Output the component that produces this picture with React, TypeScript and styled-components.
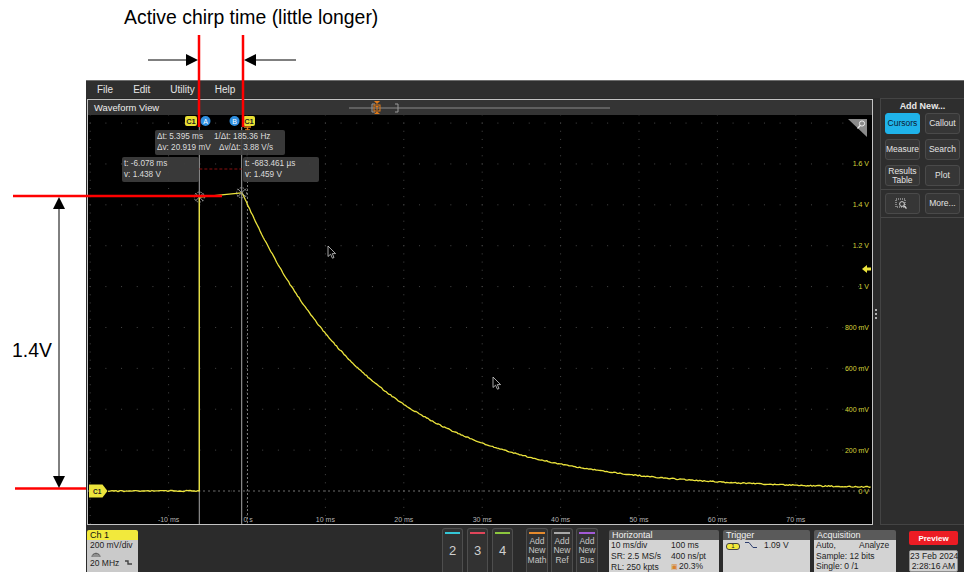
import React from "react";
import styled, { createGlobalStyle } from "styled-components";

const GlobalStyle = createGlobalStyle`
  html, body {
    margin: 0;
    padding: 0;
    background: #ffffff;
  }
  body {
    font-family: "Liberation Sans", Arial, sans-serif;
  }
`;

// plot geometry (local to the black plot area)
const PLOT_W = 784;
const PLOT_H = 409;
const ZERO_X = 159;
const PX_PER_MS = 7.84;
const ZERO_Y = 376;
const PX_PER_V = 204.4;
const DIV_X = 78.4;
const DIV_Y = 40.88;

const tx = (ms: number) => ZERO_X + ms * PX_PER_MS;
const vy = (v: number) => ZERO_Y - v * PX_PER_V;

const CURSOR_A = tx(-6.078);
const CURSOR_B = tx(-0.683);

const noise = (i: number) => {
  const s = Math.sin(i * 12.9898) * 43758.5453;
  return s - Math.floor(s) - 0.5;
};

function buildTrace() {
  const pts: string[] = [];
  for (let x = 20; x < CURSOR_A; x += 2) {
    pts.push(`${x.toFixed(1)},${(ZERO_Y + noise(x) * 1.2).toFixed(1)}`);
  }
  pts.push(`${CURSOR_A.toFixed(1)},${ZERO_Y}`);
  pts.push(`${CURSOR_A.toFixed(1)},${vy(1.438).toFixed(1)}`);
  pts.push(`${CURSOR_B.toFixed(1)},${vy(1.459).toFixed(1)}`);
  for (let x = CURSOR_B + 0.5; x <= PLOT_W; x += 1.5) {
    const t = (x - CURSOR_B) / PX_PER_MS;
    const v = 1.459 * Math.exp(-t / 16.5) + 0.008;
    pts.push(`${x.toFixed(1)},${(vy(v) + noise(x) * 1.1).toFixed(1)}`);
  }
  return pts.join(" ");
}

const TRACE = buildTrace();

const timeLabels = [-10, 0, 10, 20, 30, 40, 50, 60, 70];
const voltLabels = [
  { v: 1.6, t: "1.6 V" },
  { v: 1.4, t: "1.4 V" },
  { v: 1.2, t: "1.2 V" },
  { v: 1.0, t: "1 V" },
  { v: 0.8, t: "800 mV" },
  { v: 0.6, t: "600 mV" },
  { v: 0.4, t: "400 mV" },
  { v: 0.2, t: "200 mV" },
  { v: 0, t: "0 V" },
];

const menuItems = ["File", "Edit", "Utility", "Help"];

const sideButtons = [
  { label: "Cursors", active: true },
  { label: "Callout" },
  { label: "Measure" },
  { label: "Search" },
  { label: "Results Table" },
  { label: "Plot" },
];

function Pointer({ x, y }: { x: number; y: number }) {
  return (
    <path
      transform={`translate(${x} ${y})`}
      d="M0 0 L0 10.5 L2.6 8.2 L4.4 12.2 L6 11.5 L4.3 7.6 L7.6 7.6 Z"
      fill="#000"
      stroke="#cfcfcf"
      strokeWidth="0.8"
    />
  );
}

function PlotDrawing() {
  const vLines: number[] = [];
  for (let k = -2; k <= 8; k++) vLines.push(ZERO_X + k * DIV_X);
  const hLines: number[] = [];
  for (let k = 0; k <= 9; k++) hLines.push(ZERO_Y - k * DIV_Y);

  return (
    <svg width={PLOT_W} height={PLOT_H} viewBox={`0 0 ${PLOT_W} ${PLOT_H}`}>
      {/* graticule */}
      {hLines.map((y) => (
        <line
          key={`h${y}`}
          x1={vLines[0] - 0.5}
          x2={PLOT_W}
          y1={y}
          y2={y}
          stroke="#474747"
          strokeWidth="1"
          strokeDasharray={`1 ${DIV_X / 5 - 1}`}
        />
      ))}
      {vLines.map((x) => (
        <line
          key={`v${x}`}
          x1={x}
          x2={x}
          y1={ZERO_Y + (DIV_Y / 5) * 4 + 0.5}
          y2={0}
          stroke="#474747"
          strokeWidth="1"
          strokeDasharray={`1 ${DIV_Y / 5 - 1}`}
        />
      ))}

      {/* ground reference + trigger position */}
      <line x1={0} x2={PLOT_W} y1={ZERO_Y} y2={ZERO_Y} stroke="#6c6c6c" strokeDasharray="2 3" />
      <line x1={ZERO_X + 0.5} x2={ZERO_X + 0.5} y1={14} y2={PLOT_H} stroke="#777" strokeDasharray="2 2" />

      {/* cursors */}
      <line x1={CURSOR_A} x2={CURSOR_A} y1={12} y2={PLOT_H} stroke="#8c8c8c" strokeWidth="1.2" />
      <line x1={CURSOR_B} x2={CURSOR_B} y1={12} y2={PLOT_H} stroke="#8c8c8c" strokeWidth="1.2" />
      <line
        x1={CURSOR_A}
        x2={CURSOR_B}
        y1={54}
        y2={54}
        stroke="#8a1010"
        strokeWidth="1"
        strokeDasharray="3 2"
      />

      {/* trace */}
      <polyline points={TRACE} fill="none" stroke="#ece43c" strokeWidth="1.3" strokeLinejoin="round" />

      {/* cursor crosshairs */}
      {[
        [CURSOR_A, vy(1.438)],
        [CURSOR_B, vy(1.459)],
      ].map(([cx, cy]) => (
        <g key={cx} stroke="#9a9a9a" strokeWidth="1" fill="none">
          <line x1={cx - 4} y1={cy - 4} x2={cx + 4} y2={cy + 4} />
          <line x1={cx - 4} y1={cy + 4} x2={cx + 4} y2={cy - 4} />
          <circle cx={cx} cy={cy} r="5" strokeDasharray="1.5 1.5" />
        </g>
      ))}

      {/* cursor badges */}
      <rect x={97} y={1} width={12} height={10} rx={2} fill="#e8df33" />
      <text x={103} y={9} fontSize="7.5" fontWeight="bold" textAnchor="middle" fill="#222">
        C1
      </text>
      <circle cx={117.5} cy={6} r={5} fill="#2f8fe0" />
      <text x={117.5} y={8.6} fontSize="7" textAnchor="middle" fill="#fff">
        A
      </text>
      <circle cx={146.5} cy={6} r={5} fill="#2f8fe0" />
      <text x={146.5} y={8.6} fontSize="7" textAnchor="middle" fill="#fff">
        B
      </text>
      <rect x={155} y={1} width={12} height={10} rx={2} fill="#e8df33" />
      <text x={161} y={9} fontSize="7.5" fontWeight="bold" textAnchor="middle" fill="#222">
        C1
      </text>
      <path d="M156 12 L163 12 M159.5 12 L159.5 15 M157 15 L162 15" stroke="#e07b1a" strokeWidth="1.4" fill="none" />

      {/* voltage axis */}
      {voltLabels.map((l) => (
        <text
          key={l.t}
          x={781}
          y={vy(l.v) + 2.5}
          fontSize="7"
          textAnchor="end"
          fill="#d6d33a"
        >
          {l.t}
        </text>
      ))}

      {/* time axis */}
      {timeLabels.map((ms) => (
        <text
          key={ms}
          x={ms === 0 ? ZERO_X - 3.5 : tx(ms)}
          y={406.5}
          fontSize="7"
          textAnchor={ms === 0 ? "start" : "middle"}
          fill="#b4b4b4"
        >
          {ms === 0 ? "0 s" : `${ms} ms`}
        </text>
      ))}

      {/* channel ground marker */}
      <path d="M1 369.5 L14.5 369.5 L19.5 376 L14.5 382.5 L1 382.5 Z" fill="#ece43c" />
      <text x={5} y={378.5} fontSize="6.5" fontWeight="bold" fill="#222">
        C1
      </text>

      {/* trigger level */}
      <path d="M774 154 L779 150 L779 152.5 L783 152.5 L783 155.5 L779 155.5 L779 158 Z" fill="#ece43c" />

      {/* zoom corner */}
      <path d="M760 4 L779 4 L779 22 Z" fill="#8a8a8a" />
      <circle cx={774} cy={8.5} r={2.6} stroke="#eee" strokeWidth="1" fill="none" />
      <line x1={772.2} y1={10.5} x2={769.5} y2={13.5} stroke="#eee" strokeWidth="1.2" />

      <Pointer x={240} y={131} />
      <Pointer x={405} y={262} />
    </svg>
  );
}

function HeaderSlider() {
  return (
    <svg width="262" height="15" viewBox="0 0 262 15">
      <line x1="0" x2="261" y1="8" y2="8" stroke="#8a8a8a" strokeWidth="1" />
      <path d="M26 4 L23 4 L23 12 L26 12" stroke="#9a9a9a" fill="none" />
      <path d="M46 4 L49 4 L49 12 L46 12" stroke="#9a9a9a" fill="none" />
      <path d="M25 1 L31 1 L28 4 Z" fill="#e07b1a" />
      <rect x="25" y="5" width="6" height="6" stroke="#e07b1a" fill="none" />
      <path d="M26.5 6.5 L29.5 6.5 M28 6.5 L28 10" stroke="#e07b1a" />
      <path d="M25 14 L31 14 L28 11.5 Z" fill="#e07b1a" />
    </svg>
  );
}

function AnnotationLayer() {
  return (
    <Overlay width="964" height="572" viewBox="0 0 964 572">
      <line x1="199" y1="35" x2="199" y2="127" stroke="#ff0000" strokeWidth="2.5" />
      <line x1="243" y1="35" x2="243" y2="127" stroke="#ff0000" strokeWidth="2.5" />
      <line x1="13" y1="196" x2="222" y2="196" stroke="#ff0000" strokeWidth="2.5" />
      <line x1="15" y1="488.5" x2="86" y2="488.5" stroke="#ff0000" strokeWidth="2.5" />

      <line x1="148" y1="60" x2="188" y2="60" stroke="#000" strokeWidth="1" />
      <path d="M186 54 L198 60 L186 66 Z" fill="#000" />
      <line x1="296" y1="60" x2="254" y2="60" stroke="#000" strokeWidth="1" />
      <path d="M256 54 L244 60 L256 66 Z" fill="#000" />

      <line x1="59" y1="206" x2="59" y2="478" stroke="#000" strokeWidth="1" />
      <path d="M53 209 L59 197 L65 209 Z" fill="#000" />
      <path d="M53 476 L59 488 L65 476 Z" fill="#000" />
    </Overlay>
  );
}

export default function App() {
  return (
    <>
      <GlobalStyle />
      <Page>
        <TitleRow>
          <Title>Active chirp time (little longer)</Title>
        </TitleRow>

        <BodyRow>
          <Gutter>
            <LevelLabel>1.4V</LevelLabel>
          </Gutter>

          <Scope>
            <MenuBar>
              {menuItems.map((m) => (
                <MenuItem key={m}>{m}</MenuItem>
              ))}
            </MenuBar>

            <MainRow>
              <WaveformView>
                <ViewHeader>
                  <ViewTitle>Waveform View</ViewTitle>
                  <SliderSlot>
                    <HeaderSlider />
                  </SliderSlot>
                </ViewHeader>
                <PlotArea>
                  <PlotDrawing />
                  <Readout $left={67} $top={15} $width={130}>
                    <ReadoutRow>
                      <ReadoutCell $width={57}>Δt: 5.395 ms</ReadoutCell>
                      <ReadoutCell>1/Δt: 185.36 Hz</ReadoutCell>
                    </ReadoutRow>
                    <ReadoutRow>
                      <ReadoutCell $width={62}>Δv: 20.919 mV</ReadoutCell>
                      <ReadoutCell>Δv/Δt: 3.88 V/s</ReadoutCell>
                    </ReadoutRow>
                  </Readout>
                  <Readout $left={34} $top={42} $width={77}>
                    <ReadoutRow>
                      <ReadoutCell>t: -6.078 ms</ReadoutCell>
                    </ReadoutRow>
                    <ReadoutRow>
                      <ReadoutCell>v: 1.438 V</ReadoutCell>
                    </ReadoutRow>
                  </Readout>
                  <Readout $left={155} $top={42} $width={76}>
                    <ReadoutRow>
                      <ReadoutCell>t: -683.461 µs</ReadoutCell>
                    </ReadoutRow>
                    <ReadoutRow>
                      <ReadoutCell>v: 1.459 V</ReadoutCell>
                    </ReadoutRow>
                  </Readout>
                </PlotArea>
              </WaveformView>

              <Handle>
                <HandleDot />
                <HandleDot />
                <HandleDot />
              </Handle>

              <SidePanel>
                <SideTitle>Add New...</SideTitle>
                <SideGrid>
                  {sideButtons.map((b) => (
                    <SideButton key={b.label} $active={b.active}>
                      {b.label === "Results Table" ? (
                        <>
                          Results
                          <br />
                          Table
                        </>
                      ) : (
                        b.label
                      )}
                    </SideButton>
                  ))}
                </SideGrid>
                <SideDivider />
                <SideGrid>
                  <SideButton>
                    <svg width="14" height="12" viewBox="0 0 14 12">
                      <rect x="1" y="1" width="9" height="8" stroke="#cfcfcf" strokeDasharray="1 1" fill="none" />
                      <circle cx="7" cy="6" r="2.4" stroke="#cfcfcf" fill="none" />
                      <line x1="8.8" y1="7.8" x2="11.5" y2="10.5" stroke="#cfcfcf" strokeWidth="1.3" />
                    </svg>
                  </SideButton>
                  <SideButton>More...</SideButton>
                </SideGrid>
                <SideDivider />
              </SidePanel>
            </MainRow>

            <BottomBar>
              <ChannelBadge>
                <BadgeHead>Ch 1</BadgeHead>
                <BadgeBody>
                  <div>200 mV/div</div>
                  <svg width="10" height="8" viewBox="0 0 10 8">
                    <path d="M1 7 C1 2 9 2 9 7" stroke="#555" fill="none" />
                    <path d="M3 7 L3 4 M5 7 L5 3.5 M7 7 L7 4" stroke="#555" />
                  </svg>
                  <BadgeLine>
                    <span>20 MHz</span>
                    <svg width="7" height="6" viewBox="0 0 7 6">
                      <path d="M0 1 L3 1 L3 4 L7 4" stroke="#444" strokeWidth="1.4" fill="none" />
                    </svg>
                  </BadgeLine>
                </BadgeBody>
              </ChannelBadge>

              <ButtonGroup $offset={304} $gap={4}>
                <TileButton $stripe="#34c6d6" $width={21}>
                  <TileNumber>2</TileNumber>
                </TileButton>
                <TileButton $stripe="#e0455a" $width={21}>
                  <TileNumber>3</TileNumber>
                </TileButton>
                <TileButton $stripe="#8cc63e" $width={21}>
                  <TileNumber>4</TileNumber>
                </TileButton>
              </ButtonGroup>

              <ButtonGroup $offset={13} $gap={3}>
                <TileButton $stripe="#e58a2d" $width={22}>
                  <TileText>Add New Math</TileText>
                </TileButton>
                <TileButton $stripe="#a9a9a9" $width={22}>
                  <TileText>Add New Ref</TileText>
                </TileButton>
                <TileButton $stripe="#a15ad6" $width={22}>
                  <TileText>Add New Bus</TileText>
                </TileButton>
              </ButtonGroup>

              <ButtonGroup $offset={11} $gap={4}>
                <InfoBox $width={110}>
                  <InfoHead>Horizontal</InfoHead>
                  <InfoBody>
                    <InfoLine>
                      <InfoCell $width={60}>10 ms/div</InfoCell>
                      <InfoCell>100 ms</InfoCell>
                    </InfoLine>
                    <InfoLine>
                      <InfoCell $width={60}>SR: 2.5 MS/s</InfoCell>
                      <InfoCell>400 ns/pt</InfoCell>
                    </InfoLine>
                    <InfoLine>
                      <InfoCell $width={60}>RL: 250 kpts</InfoCell>
                      <InfoCell>
                        <WarnMark>▣</WarnMark>20.3%
                      </InfoCell>
                    </InfoLine>
                  </InfoBody>
                </InfoBox>

                <InfoBox $width={87}>
                  <InfoHead>Trigger</InfoHead>
                  <InfoBody>
                    <InfoLine>
                      <TriggerPill>1</TriggerPill>
                      <svg width="14" height="8" viewBox="0 0 14 8">
                        <path d="M1 1.5 L5 1.5 L9 6.5 L13 6.5" stroke="#2d3e6e" fill="none" />
                      </svg>
                      <InfoCell $pad={6}>1.09 V</InfoCell>
                    </InfoLine>
                  </InfoBody>
                </InfoBox>

                <InfoBox $width={82}>
                  <InfoHead>Acquisition</InfoHead>
                  <InfoBody>
                    <InfoLine>
                      <InfoCell $width={43}>Auto,</InfoCell>
                      <InfoCell>Analyze</InfoCell>
                    </InfoLine>
                    <InfoLine>
                      <InfoCell>Sample: 12 bits</InfoCell>
                    </InfoLine>
                    <InfoLine>
                      <InfoCell>Single: 0 /1</InfoCell>
                    </InfoLine>
                  </InfoBody>
                </InfoBox>
              </ButtonGroup>

              <PreviewColumn>
                <PreviewButton>Preview</PreviewButton>
                <DateBox>
                  <div>23 Feb 2024</div>
                  <div>2:28:16 AM</div>
                </DateBox>
              </PreviewColumn>
            </BottomBar>
          </Scope>
        </BodyRow>

        <AnnotationLayer />
      </Page>
    </>
  );
}

const Page = styled.div`
  position: relative;
  width: 964px;
  height: 572px;
  overflow: hidden;
  background: #ffffff;
`;

const Overlay = styled.svg`
  position: absolute;
  left: 0;
  top: 0;
  pointer-events: none;
`;

const TitleRow = styled.div`
  height: 80px;
  box-sizing: border-box;
  padding: 6px 0 0 124px;
`;

const Title = styled.div`
  font-family: "Liberation Sans", Arial, sans-serif;
  font-size: 19.4px;
  line-height: 22px;
  color: #000;
`;

const BodyRow = styled.div`
  display: flex;
  height: 492px;
`;

const Gutter = styled.div`
  width: 86px;
  flex-shrink: 0;
  box-sizing: border-box;
  padding: 259px 0 0 12px;
`;

const LevelLabel = styled.div`
  font-size: 19.4px;
  line-height: 22px;
  color: #000;
`;

const Scope = styled.div`
  width: 878px;
  display: flex;
  flex-direction: column;
  background: #2a2a2a;
  font-family: "Liberation Sans", Arial, sans-serif;
`;

const MenuBar = styled.div`
  height: 18px;
  box-sizing: border-box;
  border-top: 1px solid #6e6e6e;
  background: #2f2f2f;
  display: flex;
  align-items: center;
  gap: 20px;
  padding-left: 11px;
`;

const MenuItem = styled.span`
  font-size: 10px;
  color: #e6e6e6;
`;

const MainRow = styled.div`
  height: 428px;
  display: flex;
  box-sizing: border-box;
  padding-top: 1px;
`;

const WaveformView = styled.div`
  width: 786px;
  height: 426px;
  margin-left: 1px;
  box-sizing: border-box;
  border: 1px solid #c4c4c4;
  display: flex;
  flex-direction: column;
  background: #000;
`;

const ViewHeader = styled.div`
  height: 15px;
  background: #343434;
  display: flex;
  align-items: center;
  padding-left: 6px;
`;

const ViewTitle = styled.span`
  width: 66px;
  font-size: 9.4px;
  color: #eeeeee;
  white-space: nowrap;
`;

const SliderSlot = styled.div`
  margin-left: 189px;
  height: 15px;
  display: flex;
  align-items: center;
`;

const PlotArea = styled.div`
  position: relative;
  width: 784px;
  height: 409px;
  background: #000;

  > svg {
    display: block;
  }
`;

const Readout = styled.div<{ $left: number; $top: number; $width: number }>`
  position: absolute;
  left: ${({ $left }) => $left}px;
  top: ${({ $top }) => $top}px;
  width: ${({ $width }) => $width}px;
  box-sizing: border-box;
  padding: 2px 2px;
  background: rgba(62, 62, 62, 0.92);
  border-radius: 2px;
  color: #dcdcdc;
  font-size: 8.2px;
  line-height: 10.5px;
`;

const ReadoutRow = styled.div`
  display: flex;
  white-space: nowrap;
`;

const ReadoutCell = styled.span<{ $width?: number }>`
  ${({ $width }) => ($width ? `width: ${$width}px;` : "")}
  flex-shrink: 0;
`;

const Handle = styled.div`
  width: 7px;
  display: flex;
  flex-direction: column;
  align-items: center;
  justify-content: center;
  gap: 2px;
  padding-top: 2px;
`;

const HandleDot = styled.span`
  width: 2px;
  height: 2px;
  background: #b0b0b0;
`;

const SidePanel = styled.div`
  width: 85px;
  height: 427px;
  margin-top: -1px;
  box-sizing: border-box;
  border: 1px solid #444;
  border-right: none;
  background: #2e2e2e;
  display: flex;
  flex-direction: column;
`;

const SideTitle = styled.div`
  height: 14px;
  line-height: 14px;
  text-align: center;
  font-size: 9px;
  font-weight: bold;
  color: #e8e8e8;
`;

const SideGrid = styled.div`
  display: grid;
  grid-template-columns: 35px 35px;
  grid-auto-rows: 21px;
  gap: 5px;
  padding: 0 4px;
`;

const SideButton = styled.div<{ $active?: boolean }>`
  box-sizing: border-box;
  border-radius: 3px;
  border: 1px solid ${({ $active }) => ($active ? "#1fb3ea" : "#4a4a4a")};
  background: ${({ $active }) => ($active ? "#1fb3ea" : "#363636")};
  color: ${({ $active }) => ($active ? "#0c2030" : "#e4e4e4")};
  font-size: 8.5px;
  line-height: 9px;
  display: flex;
  align-items: center;
  justify-content: center;
  text-align: center;
  white-space: nowrap;
`;

const SideDivider = styled.div`
  height: 1px;
  background: #474747;
  margin: 3px 0;
`;

const BottomBar = styled.div`
  flex: 1;
  display: flex;
  box-sizing: border-box;
  padding: 2px 0 0 1px;
  background: #2b2b2b;
  overflow: hidden;
`;

const ChannelBadge = styled.div`
  width: 51px;
  margin-top: 2px;
  display: flex;
  flex-direction: column;
  border-radius: 2px 2px 0 0;
  overflow: hidden;
`;

const BadgeHead = styled.div`
  height: 10px;
  line-height: 10px;
  padding-left: 3px;
  background: #f2e93c;
  color: #111;
  font-size: 9px;
`;

const BadgeBody = styled.div`
  flex: 1;
  background: #cacaca;
  color: #222;
  font-size: 8.5px;
  line-height: 10px;
  padding: 0 3px;

  > svg {
    display: block;
    margin: 0 0 0 1px;
  }
`;

const BadgeLine = styled.div`
  display: flex;
  align-items: center;
  justify-content: space-between;
  padding-right: 3px;
`;

const ButtonGroup = styled.div<{ $offset: number; $gap: number }>`
  display: flex;
  margin-left: ${({ $offset }) => $offset}px;
  gap: ${({ $gap }) => $gap}px;
`;

const TileButton = styled.div<{ $stripe: string; $width: number }>`
  position: relative;
  width: ${({ $width }) => $width}px;
  box-sizing: border-box;
  border: 1px solid #4e4e4e;
  border-bottom: none;
  border-radius: 3px 3px 0 0;
  background: #323232;
  display: flex;
  flex-direction: column;
  align-items: center;
  padding-top: 3px;

  &::before {
    content: "";
    display: block;
    width: calc(100% - 4px);
    height: 1.5px;
    background: ${({ $stripe }) => $stripe};
  }
`;

const TileNumber = styled.span`
  margin-top: 9px;
  font-size: 13px;
  color: #cfcfcf;
`;

const TileText = styled.span`
  margin-top: 3px;
  width: 22px;
  font-size: 8.5px;
  line-height: 9.5px;
  text-align: center;
  color: #c6c6c6;
`;

const InfoBox = styled.div<{ $width: number }>`
  width: ${({ $width }) => $width}px;
  margin-top: 2px;
  display: flex;
  flex-direction: column;
  border-radius: 2px 2px 0 0;
  overflow: hidden;
`;

const InfoHead = styled.div`
  height: 10px;
  line-height: 10px;
  padding-left: 3px;
  background: #5a5a5a;
  color: #f2f2f2;
  font-size: 9px;
`;

const InfoBody = styled.div`
  flex: 1;
  background: #d3d3d3;
  color: #1e1e1e;
  font-size: 8.5px;
  line-height: 10.6px;
  padding: 0 2px;
`;

const InfoLine = styled.div`
  display: flex;
  align-items: center;
  white-space: nowrap;
`;

const InfoCell = styled.span<{ $width?: number; $pad?: number }>`
  ${({ $width }) => ($width ? `width: ${$width}px;` : "")}
  ${({ $pad }) => ($pad ? `padding-left: ${$pad}px;` : "")}
  flex-shrink: 0;
`;

const WarnMark = styled.span`
  color: #d9822b;
  font-size: 7px;
  margin-right: 1px;
`;

const TriggerPill = styled.span`
  width: 14px;
  height: 7px;
  margin: 2px 4px 0 1px;
  box-sizing: border-box;
  border: 1px solid #444;
  border-radius: 3px;
  background: #f2e93c;
  font-size: 6px;
  line-height: 5px;
  text-align: center;
  color: #222;
`;

const PreviewColumn = styled.div`
  width: 49px;
  margin-left: 13px;
  padding-top: 3px;
  display: flex;
  flex-direction: column;
  gap: 5px;
`;

const PreviewButton = styled.div`
  height: 16px;
  border-radius: 2px;
  background: #ec1c24;
  color: #fff;
  font-size: 8px;
  font-weight: bold;
  display: flex;
  align-items: center;
  justify-content: center;
`;

const DateBox = styled.div`
  flex: 1;
  box-sizing: border-box;
  border: 1px solid #8f8f8f;
  border-radius: 2px;
  background: #d0d0d0;
  color: #1c1c1c;
  font-size: 8.6px;
  line-height: 10px;
  text-align: center;
  white-space: nowrap;
`;
